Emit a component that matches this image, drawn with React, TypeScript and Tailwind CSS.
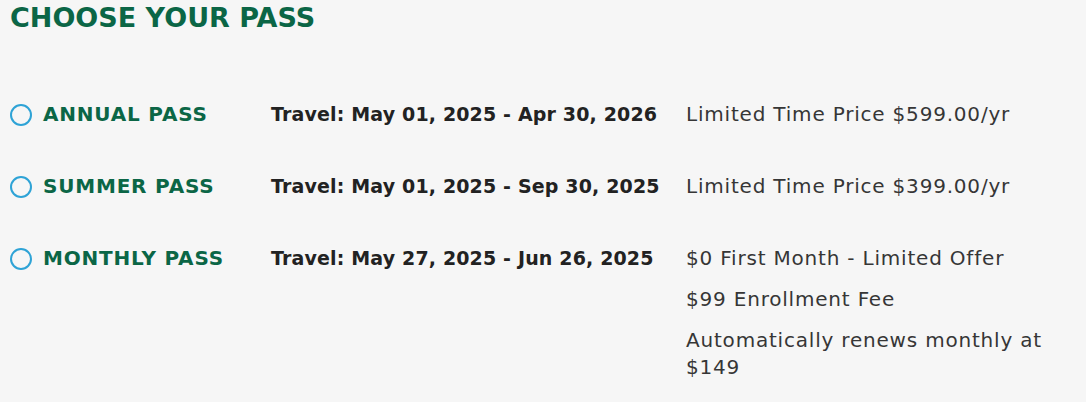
import React from "react";

const passes = [
  {
    name: "ANNUAL PASS",
    travel: "Travel: May 01, 2025 - Apr 30, 2026",
    details: ["Limited Time Price $599.00/yr"],
  },
  {
    name: "SUMMER PASS",
    travel: "Travel: May 01, 2025 - Sep 30, 2025",
    details: ["Limited Time Price $399.00/yr"],
  },
  {
    name: "MONTHLY PASS",
    travel: "Travel: May 27, 2025 - Jun 26, 2025",
    details: [
      "$0 First Month - Limited Offer",
      "$99 Enrollment Fee",
      "Automatically renews monthly at $149",
    ],
  },
];

export default function App() {
  return (
    <div
      className="w-[1086px] h-[402px] bg-[#f6f6f6] overflow-hidden"
      style={{ fontFamily: '"DejaVu Sans", sans-serif' }}
    >
      <h1 className="pl-[10px] pt-[3px] text-[27px] leading-[30px] font-bold text-[#0b6646]">
        CHOOSE YOUR PASS
      </h1>
      <div className="mt-[68px] flex flex-col gap-[45px]">
        {passes.map((p) => (
          <div key={p.name} className="flex items-start">
            <div className="w-[271px] shrink-0 flex items-center pl-[10px] h-[27px]">
              <span className="w-[22px] h-[22px] shrink-0 rounded-full border-2 border-[#2ea3d6] mr-[11px]" />
              <span className="text-[20px] tracking-[0.8px] font-semibold text-[#0b6646] leading-[27px] whitespace-nowrap">
                {p.name}
              </span>
            </div>
            <div className="w-[415px] shrink-0 text-[19px] tracking-[0.15px] font-bold text-[#222] leading-[27px] whitespace-nowrap">
              {p.travel}
            </div>
            <div className="w-[380px] flex flex-col gap-[14px] text-[20px] tracking-[0.8px] text-[#363636] leading-[27px]">
              {p.details.map((d) => (
                <div key={d}>{d}</div>
              ))}
            </div>
          </div>
        ))}
      </div>
    </div>
  );
}
